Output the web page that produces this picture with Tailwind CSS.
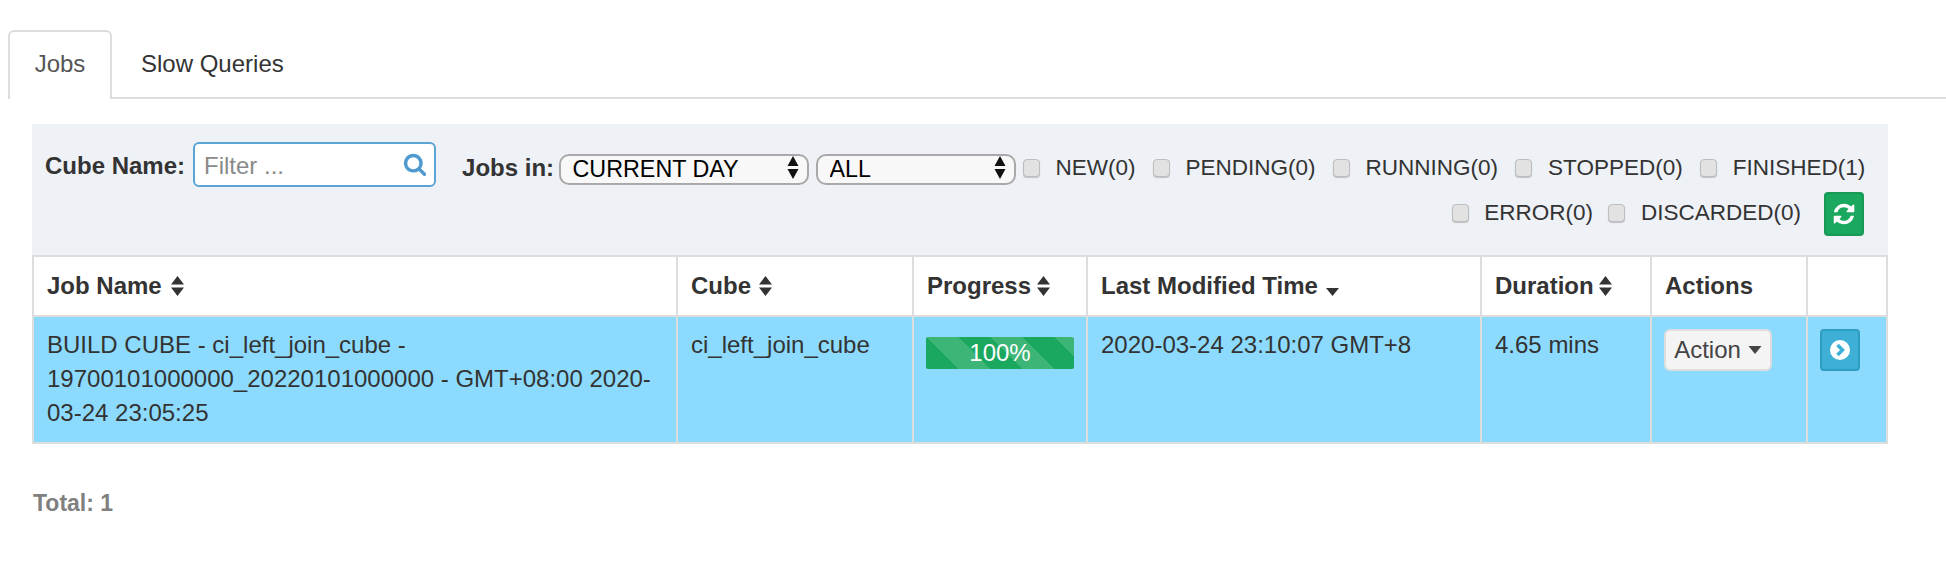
<!DOCTYPE html>
<html lang="en">
<head>
<meta charset="UTF-8">
<title>Jobs</title>
<script src="https://cdn.jsdelivr.net/npm/@tailwindcss/browser@4"></script>
</head>
<body class="bg-white font-['Liberation_Sans',Arial,sans-serif] text-[24px] leading-[34px] text-[#333]">
  <div class="pt-[30px] pl-2">
    <!-- Tabs -->
    <ul class="flex h-[69px] border-b-2 border-[#ddd]">
      <li class="w-[104px] h-[69px] pb-[3px] border-2 border-b-0 border-[#ddd] rounded-t-md bg-white text-[#555] flex items-center justify-center">Jobs</li>
      <li class="pl-[29px] h-[67px] flex items-center">Slow Queries</li>
    </ul>
  </div>

  <div class="ml-8 mt-[25px] w-[1856px]">
    <!-- Filters -->
    <div class="h-[131px] bg-[#eef1f6] pl-[13px] pr-[24px] pt-[18px]">
      <div class="flex items-start whitespace-nowrap">
        <label class="font-bold h-[45px] pt-[2px] flex items-center mr-[8px] shrink-0">Cube Name:</label>
        <div class="relative w-[243px] h-[45px] mr-[26px] shrink-0">
          <input class="w-full h-full border-2 border-[#5ba4d6] rounded-md bg-white pl-[9px] pr-10 pt-[2px] outline-none placeholder:text-[#8a8a8a]" placeholder="Filter ...">
          <svg class="absolute right-[9px] top-[10px] w-[24px] h-[24px]" viewBox="0 0 1792 1792"><path fill="#4f9bd0" d="M1216 832q0-185-131.500-316.500t-316.500-131.500-316.500 131.500-131.500 316.500 131.500 316.500 316.500 131.500 316.500-131.500 131.500-316.500zm512 832q0 52-38 90t-90 38q-54 0-90-38l-343-342q-179 124-399 124-143 0-273.500-55.500t-225-150-150-225-55.500-273.500 55.500-273.500 150-225 225-150 273.500-55.500 273.500 55.500 225 150 150 225 55.500 273.500q0 220-124 399l343 343q37 37 37 90z"/></svg>
        </div>
        <div class="flex items-center h-[31px] mt-[10px]">
          <label class="font-bold mr-[4.500px] shrink-0">Jobs in:</label>
          <div class="relative w-[250px] h-[31px] mr-[7px] shrink-0">
            <select class="appearance-none w-full h-full border-2 border-[#a9a9a9] rounded-[10px] bg-[#f8f8f8] text-black text-[23.3px] pl-[12px] leading-none"><option>CURRENT DAY</option></select>
            <svg class="absolute right-[10px] top-[4px] w-[12px] h-[23px]" viewBox="0 0 12 23"><path fill="#111" d="M6 0l5.500 10H.5zM6 23l5.500-10H.5z"/></svg>
          </div>
          <div class="relative w-[200px] h-[31px] mr-[7px] shrink-0">
            <select class="appearance-none w-full h-full border-2 border-[#a9a9a9] rounded-[10px] bg-[#f8f8f8] text-black text-[23.3px] pl-[12px] leading-none"><option>ALL</option></select>
            <svg class="absolute right-[10px] top-[4px] w-[12px] h-[23px]" viewBox="0 0 12 23"><path fill="#111" d="M6 0l5.500 10H.5zM6 23l5.500-10H.5z"/></svg>
          </div>
          <label class="flex items-center mr-[17px] text-[22.5px]"><input type="checkbox" class="appearance-none w-[17px] h-[18px] bg-[#e2e2e2] border border-[#bdbdbd] rounded-[4px] shadow-[0_1px_1px_rgba(0,0,0,0.2)] mr-[16px]">NEW(0)</label>
          <label class="flex items-center mr-[17px] text-[22.5px]"><input type="checkbox" class="appearance-none w-[17px] h-[18px] bg-[#e2e2e2] border border-[#bdbdbd] rounded-[4px] shadow-[0_1px_1px_rgba(0,0,0,0.2)] mr-[16px]">PENDING(0)</label>
          <label class="flex items-center mr-[17px] text-[22.5px]"><input type="checkbox" class="appearance-none w-[17px] h-[18px] bg-[#e2e2e2] border border-[#bdbdbd] rounded-[4px] shadow-[0_1px_1px_rgba(0,0,0,0.2)] mr-[16px]">RUNNING(0)</label>
          <label class="flex items-center mr-[17px] text-[22.5px]"><input type="checkbox" class="appearance-none w-[17px] h-[18px] bg-[#e2e2e2] border border-[#bdbdbd] rounded-[4px] shadow-[0_1px_1px_rgba(0,0,0,0.2)] mr-[16px]">STOPPED(0)</label>
          <label class="flex items-center text-[22.5px]"><input type="checkbox" class="appearance-none w-[17px] h-[18px] bg-[#e2e2e2] border border-[#bdbdbd] rounded-[4px] shadow-[0_1px_1px_rgba(0,0,0,0.2)] mr-[16px]">FINISHED(1)</label>
        </div>
      </div>
      <div class="flex justify-end items-center mt-[5px]">
        <label class="flex items-center mr-[15px] pb-[2px] text-[22.5px]"><input type="checkbox" class="appearance-none w-[17px] h-[18px] bg-[#e2e2e2] border border-[#bdbdbd] rounded-[4px] shadow-[0_1px_1px_rgba(0,0,0,0.2)] mr-[15px]">ERROR(0)</label>
        <label class="flex items-center mr-[23px] pb-[2px] text-[22.5px]"><input type="checkbox" class="appearance-none w-[17px] h-[18px] bg-[#e2e2e2] border border-[#bdbdbd] rounded-[4px] shadow-[0_1px_1px_rgba(0,0,0,0.2)] mr-[16px]">DISCARDED(0)</label>
        <button class="w-[40px] h-[44px] bg-[#1aa85f] border-2 border-[#169a55] rounded-[4px] flex items-center justify-center">
          <svg class="w-[24px] h-[24px]" viewBox="0 0 1792 1792"><path fill="#fff" d="M1639 1056q0 5-1 7-64 268-268 434.500t-478 166.500q-146 0-282.500-55t-243.500-157l-129 129q-19 19-45 19t-45-19-19-45v-448q0-26 19-45t45-19h448q26 0 45 19t19 45-19 45l-137 137q71 66 161 102t187 36q134 0 250-65t186-179q11-17 53-117 8-23 30-23h192q13 0 22.500 9.500t9.500 22.500zm25-800v448q0 26-19 45t-45 19h-448q-26 0-45-19t-19-45 19-45l138-138q-148-137-349-137-134 0-250 65t-186 179q-11 17-53 117-8 23-30 23h-199q-13 0-22.500-9.500t-9.500-22.500v-7q65-268 270-434.500t480-166.500q146 0 284 55.500t245 156.500l130-129q19-19 45-19t45 19 19 45z"/></svg>
        </button>
      </div>
    </div>

    <!-- Jobs table -->
    <table class="table-fixed border-collapse w-[1854px]">
      <colgroup>
        <col class="w-[644px]"><col class="w-[236px]"><col class="w-[174px]"><col class="w-[394px]"><col class="w-[170px]"><col class="w-[156px]"><col class="w-[80px]">
      </colgroup>
      <thead>
        <tr class="h-[60px] text-left font-bold">
          <th class="border-2 border-[#ddd] px-[13px] align-middle">Job Name <svg class="inline w-[15px] h-[20px] align-[-2px] ml-[2px]" viewBox="0 0 14 20"><path fill="#333" d="M7 0l6.500 8.500H.5zM7 20l6.500-8.500H.5z"/></svg></th>
          <th class="border-2 border-[#ddd] px-[13px] align-middle">Cube <svg class="inline w-[15px] h-[20px] align-[-2px]" viewBox="0 0 14 20"><path fill="#333" d="M7 0l6.500 8.500H.5zM7 20l6.500-8.500H.5z"/></svg></th>
          <th class="border-2 border-[#ddd] px-[13px] align-middle">Progress <svg class="inline w-[15px] h-[20px] align-[-2px] -ml-[2px]" viewBox="0 0 14 20"><path fill="#333" d="M7 0l6.500 8.500H.5zM7 20l6.500-8.500H.5z"/></svg></th>
          <th class="border-2 border-[#ddd] px-[13px] align-middle">Last Modified Time <svg class="inline w-[15px] h-[8px] align-[-2px]" viewBox="0 0 14 8"><path fill="#333" d="M.5 0h13L7 8z"/></svg></th>
          <th class="border-2 border-[#ddd] px-[13px] align-middle">Duration <svg class="inline w-[15px] h-[20px] align-[-2px] -ml-[2px]" viewBox="0 0 14 20"><path fill="#333" d="M7 0l6.500 8.500H.5zM7 20l6.500-8.500H.5z"/></svg></th>
          <th class="border-2 border-[#ddd] px-[13px] align-middle">Actions</th>
          <th class="border-2 border-[#ddd]"></th>
        </tr>
      </thead>
      <tbody>
        <tr class="bg-[#8cdbfe] h-[127px] align-top">
          <td class="border-2 border-[#ddd] px-[13px] pt-[11px]">BUILD CUBE - ci_left_join_cube - 19700101000000_20220101000000 - GMT+08:00 2020-03-24 23:05:25</td>
          <td class="border-2 border-[#ddd] px-[13px] pt-[11px]">ci_left_join_cube</td>
          <td class="border-2 border-[#ddd] px-[12px] pt-[20px]">
            <div class="w-[148px] h-[32px] rounded-[2px] bg-[#1aa85f] bg-[linear-gradient(45deg,rgba(255,255,255,.15)_25%,transparent_25%,transparent_50%,rgba(255,255,255,.15)_50%,rgba(255,255,255,.15)_75%,transparent_75%,transparent)] bg-[length:64px_64px] text-white text-center leading-[32px]">100%</div>
          </td>
          <td class="border-2 border-[#ddd] px-[13px] pt-[11px]">2020-03-24 23:10:07 GMT+8</td>
          <td class="border-2 border-[#ddd] px-[13px] pt-[11px]">4.65 mins</td>
          <td class="border-2 border-[#ddd] px-[12px] pt-[12px]">
            <button class="w-[108px] h-[42px] bg-[#f4f4f4] border-2 border-[#ddd] rounded-md text-[#444] flex items-center justify-center gap-[7px]">Action <svg class="w-[14px] h-[8px]" viewBox="0 0 14 8"><path fill="#444" d="M.5 0h13L7 8z"/></svg></button>
          </td>
          <td class="border-2 border-[#ddd] px-[12px] pt-[12px]">
            <button class="w-[40px] h-[42px] bg-[#3eb0d5] border-2 border-[#2e9dc2] rounded-[4px] flex items-center justify-center">
              <svg class="w-[22px] h-[22px]" viewBox="0 0 22 22"><circle cx="11" cy="11" r="10" fill="#fff"/><path d="M8.500 6l5 5-5 5" fill="none" stroke="#3eb0d5" stroke-width="3.500"/></svg>
            </button>
          </td>
        </tr>
      </tbody>
    </table>

    <p class="mt-[42px] ml-[1px] font-bold text-[23px] text-[#808080]">Total: 1</p>
  </div>
</body>
</html>
